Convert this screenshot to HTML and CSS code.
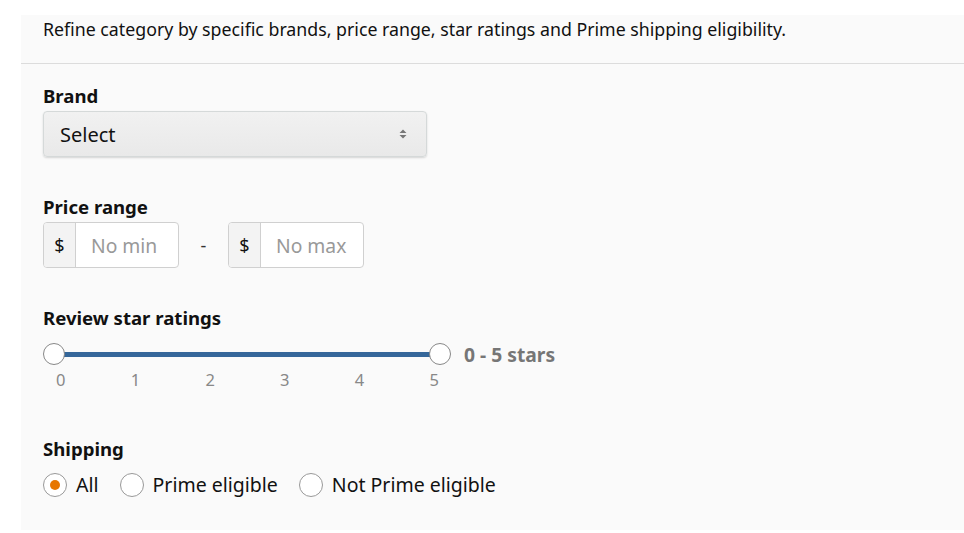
FILE: index.html
```html
<!DOCTYPE html>
<html>
<head>
<meta charset="utf-8">
<link rel="stylesheet" href="styles.css">
</head>
<body>
<div class="panel">
  <div class="intro">Refine category by specific brands, price range, star ratings and Prime shipping eligibility.</div>
  <div class="content">
    <div class="field brand">
      <div class="label">Brand</div>
      <div class="select">
        <span>Select</span>
        <svg class="updown" width="8" height="10" viewBox="0 0 8 10"><path d="M4 0.5 L7.5 4 H0.5 Z M4 9.5 L7.5 6 H0.5 Z" fill="#777"/></svg>
      </div>
    </div>
    <div class="field price">
      <div class="label">Price range</div>
      <div class="price-row">
        <div class="money"><span class="cur">$</span><span class="ph">No min</span></div>
        <span class="dash">-</span>
        <div class="money"><span class="cur">$</span><span class="ph">No max</span></div>
      </div>
    </div>
    <div class="field stars">
      <div class="label">Review star ratings</div>
      <div class="slider-row">
        <div class="slider">
          <div class="track"></div>
          <span class="knob left"></span>
          <span class="knob right"></span>
        </div>
        <span class="range-text">0 - 5 stars</span>
      </div>
      <div class="ticks">
        <span>0</span><span>1</span><span>2</span><span>3</span><span>4</span><span>5</span>
      </div>
    </div>
    <div class="field shipping">
      <div class="label">Shipping</div>
      <div class="radios">
        <label class="radio"><span class="circle checked"></span>All</label>
        <label class="radio"><span class="circle"></span>Prime eligible</label>
        <label class="radio"><span class="circle"></span>Not Prime eligible</label>
      </div>
    </div>
  </div>
</div>
</body>
</html>
```

FILE: styles.css
```css
* { box-sizing: border-box; }
html, body { margin: 0; padding: 0; background: #fff; }
body {
  font-family: "Noto Sans", "Open Sans", Arial, sans-serif;
  color: #111;
}
.panel {
  margin: 15px 0 0 21px;
  height: 515px;
  background: #fafafa;
}
.intro {
  height: 49px;
  padding: 3px 0 0 22px;
  font-size: 17.75px;
  line-height: 22px;
  color: #111;
  border-bottom: 1px solid #dcdcdc;
}
.content {
  padding: 0 22px;
  display: flex;
  flex-direction: column;
}
.label {
  font-size: 18.6px;
  font-weight: 700;
  line-height: 22px;
  color: #111;
}
.brand { margin-top: 21px; }
.select {
  margin-top: 4px;
  width: 384px;
  height: 46px;
  border: 1px solid #d5d9d9;
  border-radius: 4px;
  background: linear-gradient(#f1f1f1, #e9e9e9);
  box-shadow: 0 1px 2px rgba(0,0,0,0.15);
  display: flex;
  align-items: center;
  justify-content: space-between;
  padding: 0 19px 0 16px;
  font-size: 20px;
  color: #111;
}
.price { margin-top: 39px; }
.price-row {
  margin-top: 4px;
  display: flex;
  align-items: center;
}
.money {
  width: 136px;
  height: 46px;
  border: 1px solid #d0d0d0;
  border-radius: 4px;
  background: #fff;
  display: flex;
  overflow: hidden;
}
.cur {
  width: 32px;
  background: #f3f3f3;
  border-right: 1px solid #d0d0d0;
  display: flex;
  align-items: center;
  justify-content: center;
  font-size: 18px;
  color: #111;
}
.ph {
  display: flex;
  align-items: center;
  padding-left: 15px;
  font-size: 19.3px;
  color: #999;
}
.dash {
  width: 49px;
  text-align: center;
  font-size: 18px;
  color: #333;
}
.stars { margin-top: 39px; }
.slider-row {
  margin-top: 14px;
  display: flex;
  align-items: center;
  height: 22px;
}
.slider {
  position: relative;
  width: 408px;
  height: 22px;
}
.track {
  position: absolute;
  left: 11px;
  right: 11px;
  top: 9px;
  height: 5px;
  background: #35679a;
}
.knob {
  position: absolute;
  top: 0;
  width: 22px;
  height: 22px;
  border-radius: 50%;
  border: 1.5px solid #888;
  background: #fff;
}
.knob.left { left: 0; }
.knob.right { right: 0; }
.range-text {
  margin-left: 13px;
  font-size: 19.3px;
  font-weight: 700;
  color: #767676;
}
.ticks {
  margin-top: 4px;
  width: 398px;
  display: flex;
  justify-content: space-between;
  padding: 0 2px 0 13px;
  font-size: 16.5px;
  line-height: 22px;
  color: #888;
}
.shipping { margin-top: 47px; }
.radios {
  margin-top: 11px;
  display: flex;
  align-items: center;
  font-size: 19.5px;
  color: #111;
}
.radio {
  display: flex;
  align-items: center;
  margin-right: 21px;
}
.circle {
  width: 24px;
  height: 24px;
  border-radius: 50%;
  border: 1.5px solid #999;
  background: #fff;
  margin-right: 9px;
  display: flex;
  align-items: center;
  justify-content: center;
}
.circle.checked::after {
  content: "";
  width: 10px;
  height: 10px;
  border-radius: 50%;
  background: #e77600;
}
```
